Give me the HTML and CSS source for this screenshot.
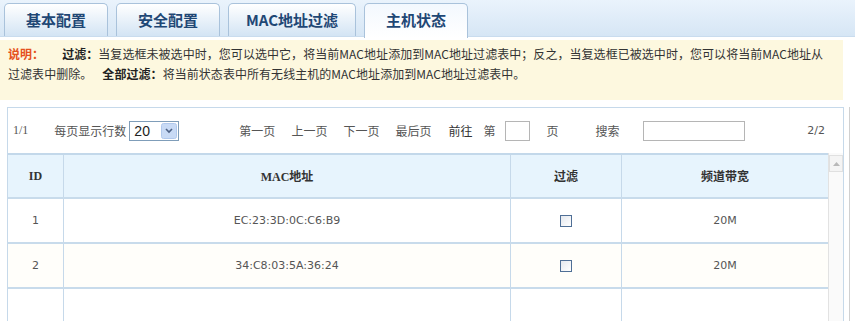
FILE: index.html
```html
<!DOCTYPE html>
<html lang="zh-CN">
<head>
  <meta charset="UTF-8" />
  <title>主机状态</title>
  <link rel="stylesheet" href="styles.css">
</head>
<body>

  <div class="tabs">
    <div class="tab">基本配置</div>
    <div class="tab">安全配置</div>
    <div class="tab wide">MAC地址过滤</div>
    <div class="tab active">主机状态</div>
  </div>

  <div class="note">
    <span class="note-label">说明：</span><strong>过滤：</strong><span>当复选框未被选中时，您可以选中它，将当前MAC地址添加到MAC地址过滤表中；反之，当复选框已被选中时，您可以将当前MAC地址从</span><br>
    <span>过滤表中删除。</span><strong class="all-filter">全部过滤：</strong><span>将当前状态表中所有无线主机的MAC地址添加到MAC地址过滤表中。</span>
  </div>

  <div class="frame">
    <div class="panel">
      <div class="toolbar">
        <span class="page-num">1/1</span>
        <span class="rows-label">每页显示行数</span>
        <select class="rows-select">
          <option>20</option>
          <option>50</option>
        </select>
        <a class="pager first">第一页</a>
        <a class="pager">上一页</a>
        <a class="pager">下一页</a>
        <a class="pager">最后页</a>
        <span class="goto">前往</span>
        <span class="page-word">第</span>
        <input class="page-input" type="text">
        <span class="pager">页</span>
        <span class="search-label">搜索</span>
        <input class="search-input" type="text">
        <span class="total">2/2</span>
      </div>

      <div class="grid-wrap">
        <table class="hosts">
          <thead>
            <tr>
              <th class="col-id">ID</th>
              <th class="col-mac">MAC地址</th>
              <th class="col-filter">过滤</th>
              <th class="col-band">频道带宽</th>
            </tr>
          </thead>
          <tbody id="hostRows">
          </tbody>
        </table>
        <div class="scrollbar">
          <div class="scroll-up"></div>
        </div>
      </div>
    </div>
  </div>

  <script>
    const hosts = [
      { id: 1, mac: "EC:23:3D:0C:C6:B9", band: "20M" },
      { id: 2, mac: "34:C8:03:5A:36:24", band: "20M" }
    ];

    const tbody = document.getElementById("hostRows");
    hosts.forEach(host => {
      const tr = document.createElement("tr");
      tr.innerHTML = `
        <td>${host.id}</td>
        <td>${host.mac}</td>
        <td><input type="checkbox" class="filter-box"></td>
        <td>${host.band}</td>
      `;
      tbody.appendChild(tr);
    });

    // empty filler row
    const filler = document.createElement("tr");
    filler.className = "filler";
    filler.innerHTML = "<td></td><td></td><td></td><td></td>";
    tbody.appendChild(filler);
  </script>
</body>
</html>
```

FILE: styles.css
```css
body {
  margin: 0;
  font-family: "Liberation Sans", "Noto Sans CJK SC", sans-serif;
  font-size: 12px;
  color: #333;
  background: #fff;
  overflow: hidden;
}

/* tabs */
.tabs {
  display: flex;
  gap: 8px;
  height: 33px;
  padding: 3px 0 0 4px;
  background: linear-gradient(#eaf3fc, #d6e6f5);
  border-bottom: 1px solid #c9dcee;
}

.tab {
  width: 102px;
  height: 32px;
  border: 1px solid #a9c2db;
  border-bottom: none;
  border-radius: 5px 5px 0 0;
  background: linear-gradient(#ffffff, #d3e4f4);
  color: #1f4775;
  font-family: "Noto Sans CJK SC", sans-serif;
  font-weight: bold;
  font-size: 15px;
  line-height: 32px;
  text-align: center;
}

.tab.wide {
  width: 126px;
}

.tab.active {
  background: linear-gradient(#f3f8fe, #ffffff);
  height: 34px;
}

/* note box */
.note {
  margin: 3px 12px 0 0;
  padding: 4px 4px 16px 8px;
  background: #fdf8df;
  font-family: "Noto Sans CJK SC", sans-serif;
  font-size: 12px;
  line-height: 20px;
  letter-spacing: 0.05px;
  color: #333;
  white-space: nowrap;
}

.note-label {
  color: #e5501c;
  font-weight: bold;
  margin-right: 18px;
}

.note strong {
  color: #222;
}

.note .all-filter {
  margin-left: 10px;
}

/* panel */
.frame {
  margin-top: 7px;
  margin-right: 5px;
  border-right: 1px solid #d0d0d0;
  padding-right: 5px;
}

.panel {
  margin-left: 7px;
  border: 1px solid #c6d9ea;
  border-bottom: none;
}

.toolbar {
  display: flex;
  align-items: center;
  height: 45px;
  color: #555;
  font-family: "Noto Sans CJK SC", sans-serif;
  font-size: 12px;
}

.page-num {
  margin-left: 5px;
  font-family: "Liberation Serif", serif;
}

.rows-label {
  margin-left: 26px;
  margin-right: 3px;
}

.rows-select {
  width: 50px;
  height: 20px;
  padding: 0 0 0 4px;
  border: 1px solid #7f9db9;
  font-family: "Liberation Sans", sans-serif;
  font-size: 14px;
  color: #222;
  background-color: #fff;
  appearance: none;
  -webkit-appearance: none;
  background-image: url("data:image/svg+xml;charset=US-ASCII,%3Csvg xmlns='http://www.w3.org/2000/svg' width='16' height='16'%3E%3Crect x='0.5' y='0.5' width='15' height='15' rx='2' fill='%23c8daf5' stroke='%23b0c8ec'/%3E%3Cpath d='M5 6l3 3 3-3' fill='none' stroke='%234d6185' stroke-width='1.6'/%3E%3C/svg%3E");
  background-repeat: no-repeat;
  background-position: right 1px center;
  background-size: 16px;
}

.pager {
  margin-left: 16px;
}

.pager.first {
  margin-left: 60px;
}

.goto {
  margin-left: 17px;
  color: #333;
}

.page-word {
  margin-left: 11px;
}

.page-input {
  width: 23px;
  height: 18px;
  margin-left: 10px;
  padding: 0;
  border: 1px solid #b5b5b5;
}

.search-label {
  margin-left: 37px;
}

.search-input {
  width: 100px;
  height: 18px;
  margin-left: 24px;
  padding: 0;
  border: 1px solid #b5b5b5;
}

.total {
  margin-left: auto;
  margin-right: 18px;
  font-family: "DejaVu Sans", sans-serif;
  font-size: 11px;
}

/* table */
.grid-wrap {
  display: flex;
}

.hosts {
  flex: 1;
  border-collapse: collapse;
  table-layout: fixed;
}

.hosts th,
.hosts td {
  text-align: center;
  border-left: 1px solid #c6d9ea;
  border-bottom: 2px solid #c8dbeb;
  padding: 0;
}

.hosts th:first-child,
.hosts td:first-child {
  border-left: none;
}

.hosts thead tr {
  height: 44px;
}

.hosts th {
  background: #e7f4fd;
  border-top: 2px solid #c3d8ea;
  font-family: "Liberation Serif", "Noto Sans CJK SC", serif;
  font-weight: bold;
  font-size: 12px;
  color: #333;
}

.hosts td {
  height: 43px;
  font-family: "DejaVu Sans", sans-serif;
  font-size: 11px;
  color: #555;
}

.hosts tbody tr:nth-child(2) td {
  background: #fffefa;
}

.hosts tr.filler td {
  border-bottom: none;
}

.col-id {
  width: 55px;
}

.col-mac {
  width: 446px;
}

.col-filter {
  width: 110px;
}

.filter-box {
  appearance: none;
  -webkit-appearance: none;
  width: 12px;
  height: 12px;
  margin: 0;
  vertical-align: middle;
  border: 1px solid #4f6f96;
  background: linear-gradient(135deg, #e4e8ee, #ffffff);
}

.scrollbar {
  width: 14px;
  border-left: 1px solid #e2e2e2;
  background: #fafafa;
}

.scroll-up {
  height: 15px;
  margin-top: 2px;
  border: 1px solid #e0e0e0;
  background: #f4f4f4 url("data:image/svg+xml;charset=US-ASCII,%3Csvg xmlns='http://www.w3.org/2000/svg' width='7' height='4'%3E%3Cpath d='M0 4l3.5-4 3.5 4z' fill='%23b8b8b8'/%3E%3C/svg%3E") no-repeat center;
}
```
